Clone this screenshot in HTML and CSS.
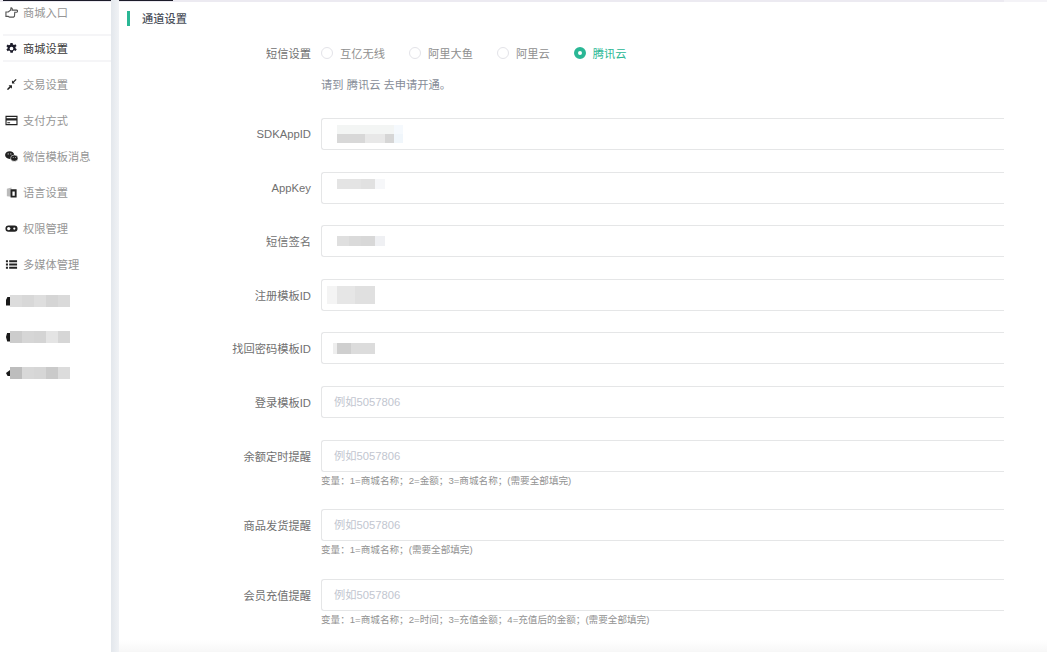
FILE: index.html
```html
<!DOCTYPE html>
<html lang="zh-CN">
<head>
  <meta charset="UTF-8">
  <title>通道设置</title>
  <link rel="stylesheet" href="styles.css">
</head>
<body>

<div class="topline"><span class="topline-dark"></span></div>

<div class="app">
  <ul class="side-menu">
    <li class="side-item">
      <svg class="side-icon" viewBox="0 0 14 14"><path d="M1 6.500h2.500L6 4.500l.5-2.500c1.300 0 1.500 1 1.200 2.500h4.800a1 1 0 0 1 0 2.200H10.500l-.3 4.300-1 1H5l-1.500-.8H1z" fill="none" stroke="#555" stroke-width="1.200"/></svg>
      商城入口
    </li>
    <li class="side-item active">
      <svg class="side-icon" viewBox="0 0 14 14"><path fill="#1c1c2a" fill-rule="evenodd" d="M5.800 1h2.400l.3 1.600 1.300.6 1.400-.9 1.300 2-1.300 1 .1 1.500 1.400.9-1.300 2.100-1.400-.8-1.300.8-.3 1.700H5.800l-.3-1.700-1.300-.7-1.400.8-1.300-2.100 1.300-.9V5.600L1.500 4.700l1.300-2 1.400.9 1.300-.7zM7 5a2 2 0 1 0 0 4 2 2 0 0 0 0-4z"/></svg>
      商城设置
    </li>
    <li class="side-item">
      <svg class="side-icon" viewBox="0 0 14 14"><path fill="#222" d="M2 12l3-3-1.200-1.200H7.500v3.700L6.300 10.300l-3 2.700zM12.500 2l-3 2.800 1.200 1.200H7.500V2.500l1.200 1.200 2.800-2.700z"/></svg>
      交易设置
    </li>
    <li class="side-item">
      <svg class="side-icon" viewBox="0 0 14 14"><path fill="#222" fill-rule="evenodd" d="M.5 2h13v10H.5zM1.700 3.200v1.300h10.600V3.200zM1.700 7v3.800h10.600V7zM2.500 9h3v.9h-3z"/></svg>
      支付方式
    </li>
    <li class="side-item">
      <svg class="side-icon" viewBox="0 0 14 14"><ellipse cx="5" cy="5.500" rx="4.900" ry="4.200" fill="#222"/><ellipse cx="10" cy="8.800" rx="4" ry="3.400" fill="#222" stroke="#fff" stroke-width=".6"/><circle cx="3.400" cy="4.200" r=".6" fill="#fff"/><circle cx="6.300" cy="4.200" r=".6" fill="#fff"/><circle cx="8.800" cy="8" r=".5" fill="#fff"/><circle cx="11.300" cy="8" r=".5" fill="#fff"/></svg>
      微信模板消息
    </li>
    <li class="side-item">
      <svg class="side-icon" viewBox="0 0 14 14"><path fill="#bbb" d="M2 3l5-1.500v10L2 11z"/><path fill="#222" fill-rule="evenodd" d="M6 3.500h6.500v9H6zM8 6v4.500h2.500V6z"/></svg>
      语言设置
    </li>
    <li class="side-item">
      <svg class="side-icon" viewBox="0 0 14 14"><rect x=".5" y="3.700" width="13" height="6.800" rx="3.300" fill="#222"/><circle cx="4" cy="7.100" r="1.800" fill="#fff"/><circle cx="10" cy="7.100" r="1.200" fill="#fff"/></svg>
      权限管理
    </li>
    <li class="side-item">
      <svg class="side-icon" viewBox="0 0 14 14"><path fill="#222" d="M1 2.500h2.200v2H1zM4.500 2.500h8.500v2H4.500zM1 6h2.200v2H1zM4.500 6h8.500v2H4.500zM1 9.500h2.200v2H1zM4.500 9.500h8.500v2H4.500z"/></svg>
      多媒体管理
    </li>
    <li class="side-item">
      <span class="side-stub stub-a"></span>
      <span class="side-mosaic mosaic-a"></span>
    </li>
    <li class="side-item">
      <span class="side-stub stub-b"></span>
      <span class="side-mosaic mosaic-b"></span>
    </li>
    <li class="side-item">
      <span class="side-stub stub-c"></span>
      <span class="side-mosaic mosaic-c"></span>
    </li>
  </ul>

  <div class="side-shade"></div>

  <main class="content">
    <h2 class="section-title">通道设置</h2>

    <div class="radio-row">
      <span class="form-label">短信设置</span>
      <div class="radio-group">
        <span class="radio"><i class="radio-dot"></i>互亿无线</span>
        <span class="radio"><i class="radio-dot"></i>阿里大鱼</span>
        <span class="radio"><i class="radio-dot"></i>阿里云</span>
        <span class="radio checked"><i class="radio-dot"></i>腾讯云</span>
      </div>
    </div>
    <p class="notice">请到 腾讯云 去申请开通。</p>

    <div class="form-row">
      <label class="form-label">SDKAppID</label>
      <div class="form-input"><span class="blur-value blur-1"></span></div>
    </div>
    <div class="form-row">
      <label class="form-label">AppKey</label>
      <div class="form-input"><span class="blur-value blur-2"></span></div>
    </div>
    <div class="form-row">
      <label class="form-label">短信签名</label>
      <div class="form-input"><span class="blur-value blur-3"></span></div>
    </div>
    <div class="form-row">
      <label class="form-label">注册模板ID</label>
      <div class="form-input"><span class="blur-value blur-4"></span></div>
    </div>
    <div class="form-row">
      <label class="form-label">找回密码模板ID</label>
      <div class="form-input"><span class="blur-value blur-5"></span></div>
    </div>
    <div class="form-row">
      <label class="form-label">登录模板ID</label>
      <div class="form-input placeholder">例如5057806</div>
    </div>
    <div class="form-row has-help">
      <label class="form-label">余额定时提醒</label>
      <div class="form-input placeholder">例如5057806</div>
      <p class="form-help">变量：1=商城名称；2=金额；3=商城名称；(需要全部填完)</p>
    </div>
    <div class="form-row has-help">
      <label class="form-label">商品发货提醒</label>
      <div class="form-input placeholder">例如5057806</div>
      <p class="form-help">变量：1=商城名称；(需要全部填完)</p>
    </div>
    <div class="form-row has-help">
      <label class="form-label">会员充值提醒</label>
      <div class="form-input placeholder">例如5057806</div>
      <p class="form-help">变量：1=商城名称；2=时间；3=充值金额；4=充值后的金额；(需要全部填完)</p>
    </div>
  </main>
</div>

<div class="bottom-shade"></div>

</body>
</html>
```

FILE: styles.css
```css
* {
  box-sizing: border-box;
}
html, body {
  margin: 0;
  height: 652px;
  overflow: hidden;
}
body {
  background: #fff;
  font-family: "Liberation Sans", "Noto Sans CJK SC", sans-serif;
  font-size: 11.250px;
  color: #707070;
  position: relative;
}

.topline {
  height: 2px;
  background: linear-gradient(90deg, #eceaf1 0 1004px, #f4f3f7 1004px);
  padding-left: 3px;
}
.topline-dark {
  display: block;
  width: 170px;
  height: 1px;
  background: #1c1c2a;
}

.app {
  display: flex;
  height: 650px;
}

.side-menu {
  list-style: none;
  margin: -4px 0 0;
  padding: 0 0 0 3px;
  width: 111px;
  flex: none;
}
.side-item {
  display: flex;
  align-items: center;
  gap: 5px;
  height: 28px;
  margin-bottom: 8px;
  padding-left: 2px;
  color: #969696;
  border-top: 2px solid transparent;
  border-bottom: 2px solid transparent;
}
.side-item.active {
  color: #3a3a3a;
  border-color: #f5f5f7;
}
.side-icon {
  width: 13px;
  height: 13px;
  flex: none;
}
.side-stub {
  width: 4px;
  height: 9px;
  margin: 2px 0 0 1px;
  background: #1a1a1a;
  flex: none;
}
.stub-a {
  clip-path: polygon(40% 0, 100% 0, 100% 100%, 0 100%, 0 40%);
}
.stub-b {
  clip-path: polygon(30% 0, 100% 0, 100% 100%, 30% 100%, 0 50%);
}
.stub-c {
  height: 6px;
  clip-path: polygon(100% 0, 100% 100%, 40% 100%, 0 50%);
}
.side-mosaic {
  width: 60px;
  height: 12px;
  margin: 2px 0 0 -5px;
  flex: none;
}
.mosaic-a {
  background: linear-gradient(90deg, #dcdcdc 0 12px, #d8d8d8 12px 24px, #dedede 24px 36px, #d5d5d5 36px 48px, #dadada 48px);
}
.mosaic-b {
  background: linear-gradient(90deg, #cccccc 0 12px, #d6d6d6 12px 24px, #d4d4d4 24px 36px, #e4e4e4 36px 48px, #d6d6d6 48px);
}
.mosaic-c {
  background: linear-gradient(90deg, #bdbdbd 0 12px, #d8d8d8 12px 24px, #d6d6d6 24px 36px, #cacaca 36px 48px, #dcdcdc 48px);
}

.side-shade {
  width: 8px;
  flex: none;
  margin-top: -2px;
  background: linear-gradient(90deg, #e3e7ec, #f0f2f5);
}

.content {
  flex: 1;
  padding: 9px 43px 0 0;
  min-width: 0;
}
.section-title {
  margin: 0 0 0 8px;
  height: 15px;
  line-height: 16px;
  padding-left: 12px;
  border-left: 3px solid #2ab795;
  font-size: 11.250px;
  font-weight: 500;
  color: #4a4f5a;
}

.form-label {
  width: 192px;
  flex: none;
  text-align: right;
  color: #707070;
}

.radio-row {
  display: flex;
  align-items: center;
  gap: 10px;
  height: 16px;
  margin-top: 19px;
}
.radio-group {
  display: flex;
  gap: 24px;
}
.radio {
  display: flex;
  align-items: center;
  gap: 7px;
  color: #8f8f8f;
}
.radio-dot {
  width: 12px;
  height: 12px;
  border: 1px solid #e3e3e8;
  border-radius: 50%;
  background: #fff;
}
.radio.checked {
  color: #2ab795;
}
.radio.checked .radio-dot {
  border: 4px solid #2ab795;
}

.notice {
  margin: 16px 0 25px 202px;
  height: 16px;
  line-height: 16px;
  color: #868c97;
}

.form-row {
  display: flex;
  flex-wrap: wrap;
  align-items: center;
  column-gap: 10px;
  margin-bottom: 21.600px;
}
.form-input {
  flex: 1;
  height: 32px;
  line-height: 30px;
  padding: 0 12px;
  border: 1px solid #e5e6e7;
  border-right: none;
  border-radius: 3px 0 0 3px;
  background: #fff;
  display: flex;
  align-items: center;
}
.form-input.placeholder {
  color: #c2c6d0;
}
.form-help {
  flex: 0 0 100%;
  margin: 0;
  padding-left: 202px;
  height: 16px;
  line-height: 17px;
  font-size: 9.600px;
  color: #929292;
}

.blur-value {
  display: block;
  margin-left: 3px;
}
.blur-1 {
  width: 66px;
  height: 18px;
  background:
    linear-gradient(90deg, #f3f5f4 0 57px, #f5f9fd 57px) 0 0 / 100% 9px no-repeat,
    linear-gradient(90deg, #d8d8d8 0 28px, #e8e8e8 28px 48px, #d6d6d6 48px 57px, #f0f6fb 57px) 0 9px / 100% 9px no-repeat;
}
.blur-2 {
  width: 48px;
  height: 10px;
  margin-bottom: 7px;
  background: linear-gradient(90deg, #e4e4e4 0 24px, #e1e1e1 24px 38px, #f6f7f9 38px);
}
.blur-3 {
  width: 48px;
  height: 10px;
  margin-bottom: 1px;
  background: linear-gradient(90deg, #dfdfdf 0 12px, #dadada 12px 24px, #d8d8d8 24px 38px, #eff0f3 38px);
}
.blur-4 {
  width: 48px;
  height: 18px;
  margin-left: -7px;
  background: linear-gradient(90deg, #f4f4f4 0 10px, #e6e6e6 10px 28px, #e0e0e0 28px);
}
.blur-5 {
  width: 42px;
  height: 11px;
  margin-left: -1px;
  background: linear-gradient(90deg, #eeeeee 0 4px, #cfcfcf 4px 18px, #dcdcdc 18px);
}

.bottom-shade {
  position: absolute;
  left: 119px;
  right: 0;
  bottom: 0;
  height: 12px;
  background: linear-gradient(180deg, #fff, #f7f7f7);
}
```
